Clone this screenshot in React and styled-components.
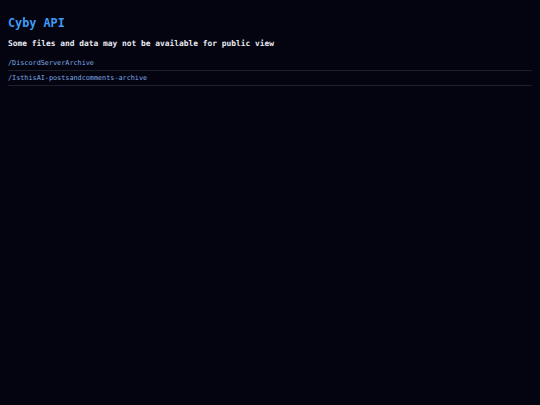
import styled, { createGlobalStyle } from 'styled-components';

const GlobalStyle = createGlobalStyle`
  html, body {
    margin: 0;
    padding: 0;
    background: #03040f;
    min-height: 100%;
  }
  body {
    font-family: "DejaVu Sans Mono", "Liberation Mono", monospace;
    color: #e6e8ef;
  }
`;

const Page = styled.main`
  min-height: 100vh;
  padding: 14px 8px 8px;
  box-sizing: border-box;
`;

const Title = styled.h1`
  margin: 0;
  font-size: 11.8px;
  font-weight: bold;
  line-height: 18px;
  color: #3f9bf5;
`;

const Notice = styled.p`
  margin: 6px 0 6px;
  font-size: 7.9px;
  font-weight: bold;
  line-height: 12px;
  color: #e9ebf2;
`;

const List = styled.ul`
  list-style: none;
  margin: 0;
  padding: 0;
  width: 524px;
`;

const Item = styled.li`
  border-bottom: 1px solid #1c1f2c;
  padding: 3px 0 3px;
  font-size: 6.8px;
  line-height: 8px;
`;

const Link = styled.a`
  color: #7fa9e6;
  text-decoration: none;
`;

const archives = [
  '/DiscordServerArchive',
  '/IsthisAI-postsandcomments-archive',
];

export default function App() {
  return (
    <>
      <GlobalStyle />
      <Page>
        <Title>Cyby API</Title>
        <Notice>Some files and data may not be available for public view</Notice>
        <List>
          {archives.map(path => (
            <Item key={path}>
              <Link href="#">{path}</Link>
            </Item>
          ))}
        </List>
      </Page>
    </>
  );
}
